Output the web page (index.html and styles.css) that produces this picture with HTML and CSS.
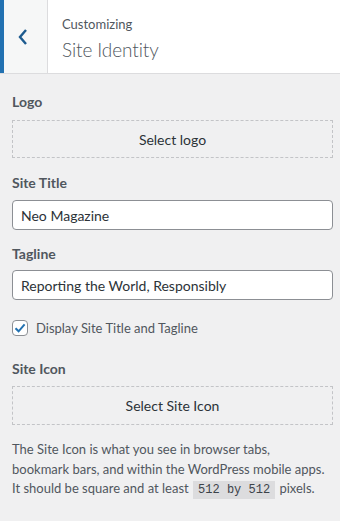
FILE: index.html
```html
<!DOCTYPE html>
<html lang="en">
<head>
    <meta charset="UTF-8">
    <meta name="viewport" content="width=device-width, initial-scale=1.0">
    <title>Site Identity</title>
    <link rel="stylesheet" href="styles.css">
</head>
<body>
    <div class="panel-head">
        <button class="back" aria-label="Back">
            <svg width="12" height="18" viewBox="0 0 12 18"><path d="M9 2 L3 9 L9 16" fill="none" stroke="currentColor" stroke-width="2.4"/></svg>
        </button>
        <div class="head-title">
            <span class="action">Customizing</span>
            <h3>Site Identity</h3>
        </div>
    </div>

    <div class="controls">
        <div class="control logo">
            <span class="control-title">Logo</span>
            <button class="upload">Select logo</button>
        </div>
        <div class="control title">
            <label class="control-title" for="blogname">Site Title</label>
            <input type="text" id="blogname" value="Neo Magazine">
        </div>
        <div class="control tagline">
            <label class="control-title" for="blogdesc">Tagline</label>
            <input type="text" id="blogdesc" value="Reporting the World, Responsibly">
        </div>
        <div class="control check-row">
            <span class="box">
                <svg width="14" height="14" viewBox="0 0 14 14"><path d="M2.5 7.2 L5.6 10.3 L11.6 3.4" fill="none" stroke="#2271b1" stroke-width="2"/></svg>
            </span>
            <span>Display Site Title and Tagline</span>
        </div>
        <div class="control icon">
            <span class="control-title">Site Icon</span>
            <button class="upload">Select Site Icon</button>
            <p class="desc">The Site Icon is what you see in browser tabs, bookmark bars, and within the WordPress mobile apps. It should be square and at least <code>512 by 512</code> pixels.</p>
        </div>
    </div>
</body>
</html>
```

FILE: styles.css
```css
* {
    box-sizing: border-box;
    margin: 0;
    padding: 0;
}

body {
    background: #f0f0f1;
    font-family: Lato, 'Open Sans', sans-serif;
    font-size: 13px;
    color: #50575e;
}

.panel-head {
    display: flex;
    height: 74px;
    background: #fff;
    border-bottom: 1px solid #dcdcde;
}

.back {
    width: 48px;
    border: none;
    border-left: 4px solid #2271b1;
    border-right: 1px solid #dcdcde;
    background: #f6f7f7;
    color: #1d5b8f;
    display: flex;
    align-items: center;
    justify-content: center;
    padding-right: 6px;
}

.head-title {
    padding: 15px 0 0 14px;
    display: flex;
    flex-direction: column;
}

.action {
    font-size: 13px;
    line-height: 18px;
}

.head-title h3 {
    font-size: 19px;
    font-weight: 300;
    letter-spacing: -0.1px;
    line-height: 30px;
    margin-top: 2px;
}

.controls {
    padding: 18px 7px 0 12px;
}

.control-title {
    display: block;
    font-size: 14px;
    font-weight: 700;
    line-height: 20px;
    margin-bottom: 7px;
    color: #50575e;
}

.logo {
    margin-bottom: 15px;
}

.logo .control-title {
    margin-bottom: 8px;
}

.logo .upload {
    height: 38px;
}

.title {
    margin-bottom: 14px;
}

.tagline .control-title {
    margin-bottom: 6px;
}

.upload {
    display: block;
    width: 100%;
    height: 39px;
    border: 1px dashed #c3c4c7;
    background: transparent;
    font-family: inherit;
    font-size: 14px;
    color: #2c3338;
}

input {
    display: block;
    width: 100%;
    height: 30px;
    border: 1px solid #8c8f94;
    border-radius: 4px;
    background: #fff;
    padding: 0 8px;
    font-family: inherit;
    font-size: 14px;
    color: #2c3338;
}

.check-row {
    display: flex;
    align-items: center;
    gap: 8px;
    height: 16px;
    margin-top: 20px;
    margin-bottom: 23px;
}

.box {
    width: 16px;
    height: 16px;
    border: 1px solid #8c8f94;
    border-radius: 4px;
    background: #fff;
    display: flex;
    align-items: center;
    justify-content: center;
}

.desc {
    margin-top: 15px;
    padding-right: 6px;
    line-height: 19.5px;
}

code {
    display: inline-block;
    font-family: 'Liberation Mono', monospace;
    font-size: 12px;
    line-height: 18px;
    background: #dcdcde;
    padding: 0 5px;
    margin: 0 1px;
    color: #3c434a;
}
```
